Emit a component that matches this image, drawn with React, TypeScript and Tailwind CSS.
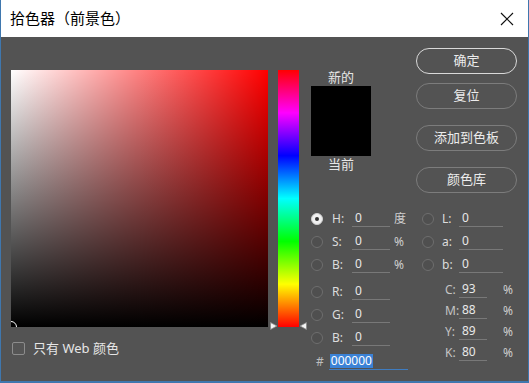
import React from "react";

const font = "font-['Noto_Sans','Noto_Sans_CJK_SC',sans-serif]";

function Radio({ on }: { on?: boolean }) {
  return on ? (
    <div className="w-[12px] h-[12px] rounded-full bg-[#f0f0f0] border border-[#cfcfcf] flex items-center justify-center shrink-0">
      <div className="w-[4px] h-[4px] rounded-full bg-[#333]" />
    </div>
  ) : (
    <div className="w-[12px] h-[12px] rounded-full bg-[#4f4f4f] border border-[#6e6e6e] shrink-0" />
  );
}

function Field({ w, v }: { w: string; v: string }) {
  return (
    <div className={`${w} h-[17px] border-b border-[#787878] pl-[3px] text-[12px] leading-[16px] text-[#e8e8e8]`}>{v}</div>
  );
}

function LeftRow({ label, unit, on, h = "h-[23px]" }: { label: string; unit?: string; on?: boolean; h?: string }) {
  return (
    <div className={`${h} flex items-center`}>
      <Radio on={on} />
      <div className="ml-[9px] w-[20px] text-[12px] text-[#dcdcdc]">{label}</div>
      <Field w="w-[38px]" v="0" />
      <div className="ml-[4px] text-[12px] text-[#cfcfcf]">{unit}</div>
    </div>
  );
}

function LabRow({ label }: { label: string }) {
  return (
    <div className="h-[23px] flex items-center">
      <Radio />
      <div className="ml-[8px] w-[17px] text-[12px] text-[#dcdcdc]">{label}</div>
      <Field w="w-[44px]" v="0" />
    </div>
  );
}

function CmykRow({ label, v }: { label: string; v: string }) {
  return (
    <div className="h-[21px] flex items-center">
      <div className="ml-[23px] w-[14px] text-[12px] text-[#c4c4c4]">{label}</div>
      <Field w="w-[28px]" v={v} />
      <div className="ml-[16px] text-[12px] text-[#cfcfcf]">%</div>
    </div>
  );
}

function Btn({ children, main }: { children: React.ReactNode; main?: boolean }) {
  return (
    <div
      className={`h-[26px] w-[101px] rounded-full flex items-center justify-center text-[13px] text-[#ececec] border-[1.5px] ${
        main ? "border-[#d9d9d9]" : "border-[#7c7c7c]"
      }`}
    >
      {children}
    </div>
  );
}

export default function App() {
  return (
    <div className={`w-[529px] h-[383px] flex flex-col bg-[#535353] border-x border-b-2 border-[#3f77ae] ${font}`}>
      <div className="h-[37px] bg-white flex items-center justify-between pl-[9px] pr-[14px] shrink-0">
        <div className="text-[15px] text-black">拾色器（前景色）</div>
        <svg width="14" height="14" viewBox="0 0 14 14">
          <path d="M1 1 L13 13 M13 1 L1 13" stroke="#111" strokeWidth="1.2" />
        </svg>
      </div>
      <div className="flex-1 flex items-start pl-[10px]">
        <div className="pt-[33px] w-[257px] shrink-0">
          <div className="relative w-[257px] h-[257px] bg-[#ff0000] overflow-hidden">
            <div className="absolute inset-0 bg-[linear-gradient(to_right,#ffffff,rgba(255,255,255,0))]" />
            <div className="absolute inset-0 bg-[linear-gradient(to_bottom,rgba(0,0,0,0),#000000)]" />
            <div className="absolute left-[-6px] bottom-[-6px] w-[12px] h-[12px] rounded-full border border-white" />
          </div>
          <div className="mt-[12px] flex items-center">
            <div className="ml-[1px] w-[13px] h-[13px] border border-[#8c8c8c] rounded-[2px] bg-[#555]" />
            <div className="ml-[8px] text-[13px] text-[#e6e6e6]">只有 Web 颜色</div>
          </div>
        </div>
        <div className="ml-[10px] pt-[33px] shrink-0">
          <div className="relative w-[21px] h-[257px] bg-[linear-gradient(to_bottom,#ff0000,#ff00ff,#0000ff,#00ffff,#00ff00,#ffff00,#ff0000)]">
            <svg className="absolute left-[-8px] top-[252px]" width="8" height="8" viewBox="0 0 8 8">
              <path d="M0.5 0.5 L7 4 L0.5 7.5 Z" fill="#f4f4f4" stroke="#888" strokeWidth="0.8" />
            </svg>
            <svg className="absolute right-[-8px] top-[252px]" width="8" height="8" viewBox="0 0 8 8">
              <path d="M7.5 0.5 L1 4 L7.5 7.5 Z" fill="#f4f4f4" stroke="#888" strokeWidth="0.8" />
            </svg>
          </div>
        </div>
        <div className="ml-[12px] w-[206px] flex flex-col">
          <div className="h-[170px] flex">
            <div className="w-[60px] pt-[32px] flex flex-col items-center">
              <div className="h-[16px] leading-[16px] text-[13px] text-[#e6e6e6]">新的</div>
              <div className="mt-[1px] w-[60px] h-[70px] bg-black" />
              <div className="h-[16px] leading-[16px] text-[13px] text-[#e6e6e6]">当前</div>
            </div>
            <div className="ml-auto w-[101px] pt-[11px] flex flex-col">
              <Btn main>确定</Btn>
              <div className="mt-[9px]"><Btn>复位</Btn></div>
              <div className="mt-[16px]"><Btn>添加到色板</Btn></div>
              <div className="mt-[16px]"><Btn>颜色库</Btn></div>
            </div>
          </div>
          <div className="flex">
            <div className="w-[111px] flex flex-col">
              <LeftRow label="H:" unit="度" on />
              <LeftRow label="S:" unit="%" />
              <LeftRow label="B:" unit="%" />
              <div className="mt-[4px]" />
              <LeftRow label="R:" />
              <LeftRow label="G:" />
              <LeftRow label="B:" />
              <div className="h-[23px] mt-[1px] flex items-center">
                <div className="ml-[5px] text-[12px] text-[#bdbdbd]">#</div>
                <div className="ml-[5px] w-[79px] h-[17px] border-b border-[#3f7cc0] pl-[1px] flex items-center">
                  <span className="bg-[#3b82d6] text-white text-[12px] leading-[14px] px-[1px]">000000</span>
                </div>
              </div>
            </div>
            <div className="flex flex-col">
              <LabRow label="L:" />
              <LabRow label="a:" />
              <LabRow label="b:" />
              <div className="mt-[3px]" />
              <CmykRow label="C:" v="93" />
              <CmykRow label="M:" v="88" />
              <CmykRow label="Y:" v="89" />
              <CmykRow label="K:" v="80" />
            </div>
          </div>
        </div>
      </div>
    </div>
  );
}
